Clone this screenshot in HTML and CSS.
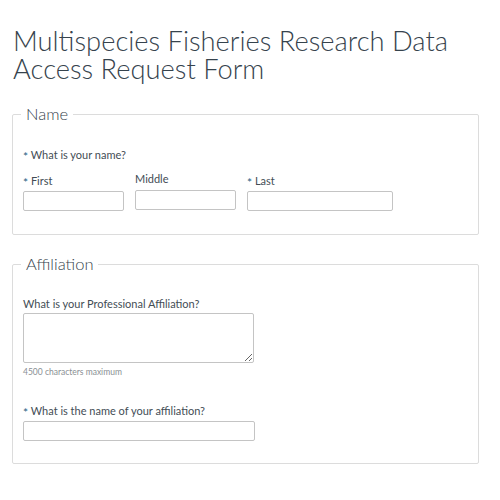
FILE: index.html
```html
<!DOCTYPE html>
<html>
<head>
<meta charset="utf-8">
<link rel="stylesheet" href="styles.css">
</head>
<body>
<div class="page">
  <h1 class="title">Multispecies Fisheries Research Data Access Request Form</h1>

  <fieldset class="group group-name">
    <legend class="legend">Name</legend>
    <div class="question"><span class="req">*</span> What is your name?</div>
    <div class="name-row">
      <div class="field field-first">
        <label class="sub-label"><span class="req">*</span> First</label>
        <input class="text-input" type="text">
      </div>
      <div class="field field-middle">
        <label class="sub-label sub-label-raised">Middle</label>
        <input class="text-input input-raised" type="text">
      </div>
      <div class="field field-last">
        <label class="sub-label"><span class="req">*</span> Last</label>
        <input class="text-input" type="text">
      </div>
    </div>
  </fieldset>

  <fieldset class="group group-aff">
    <legend class="legend">Affiliation</legend>
    <div class="question q-prof">What is your Professional Affiliation?</div>
    <textarea class="text-area"></textarea>
    <div class="hint">4500 characters maximum</div>
    <div class="question q-aff"><span class="req">*</span> What is the name of your affiliation?</div>
    <input class="text-input aff-input" type="text">
  </fieldset>
</div>
</body>
</html>
```

FILE: styles.css
```css
html, body {
  margin: 0;
  padding: 0;
  background: #ffffff;
}

body {
  font-family: Lato, "Noto Sans", "Liberation Sans", sans-serif;
  color: #434d55;
}

.page {
  padding: 0 12px;
}

.title {
  margin: 0;
  padding: 27px 0 0 1px;
  font-size: 27.3px;
  font-weight: 300;
  line-height: 28px;
  color: #36434d;
}

.group {
  margin: 0;
  width: 467px;
  box-sizing: border-box;
  border: 1px solid #dcdcdc;
  padding: 0 10px;
  border-radius: 2px;
}

.group-name {
  margin-top: 21px;
  height: 131px;
}

.group-aff {
  margin-top: 19px;
  height: 210px;
}

.legend {
  font-size: 16.5px;
  font-weight: 300;
  padding: 0 5px;
  margin-left: -2px;
  color: #36434d;
  line-height: 20px;
}

.question {
  font-size: 11px;
  line-height: 14px;
}

.group-name .question {
  margin-top: 24px;
}

.req {
  color: #1f5f7f;
  font-size: 12px;
  line-height: 8px;
  vertical-align: -2px;
}

.name-row {
  display: flex;
  gap: 11px;
  margin-top: 12px;
}

.field {
  display: flex;
  flex-direction: column;
}

.field-first { width: 101px; }
.field-middle { width: 101px; }
.field-last { width: 146px; }

.sub-label {
  font-size: 11px;
  line-height: 14px;
  height: 14px;
  margin-bottom: 3px;
}

.sub-label-raised {
  margin-top: -2px;
  margin-bottom: 4px;
}

.input-raised {
  margin-top: -1px;
}

.text-input {
  box-sizing: border-box;
  width: 100%;
  height: 20px;
  border: 1px solid #c4c4c4;
  border-radius: 2px;
  background: #fff;
  margin: 0;
  padding: 0 4px;
  font: inherit;
}

.q-prof {
  margin-top: 23px;
}

.text-area {
  display: block;
  box-sizing: border-box;
  width: 231px;
  height: 50px;
  margin: 2px 0 0 0;
  border: 1px solid #c4c4c4;
  border-radius: 2px;
  padding: 2px 4px;
  font: inherit;
  resize: vertical;
}

.hint {
  font-size: 8.5px;
  line-height: 12px;
  color: #8a8f94;
  margin-top: 3px;
}

.q-aff {
  margin-top: 26px;
}

.aff-input {
  display: block;
  width: 232px;
  margin-top: 3px;
}
```
